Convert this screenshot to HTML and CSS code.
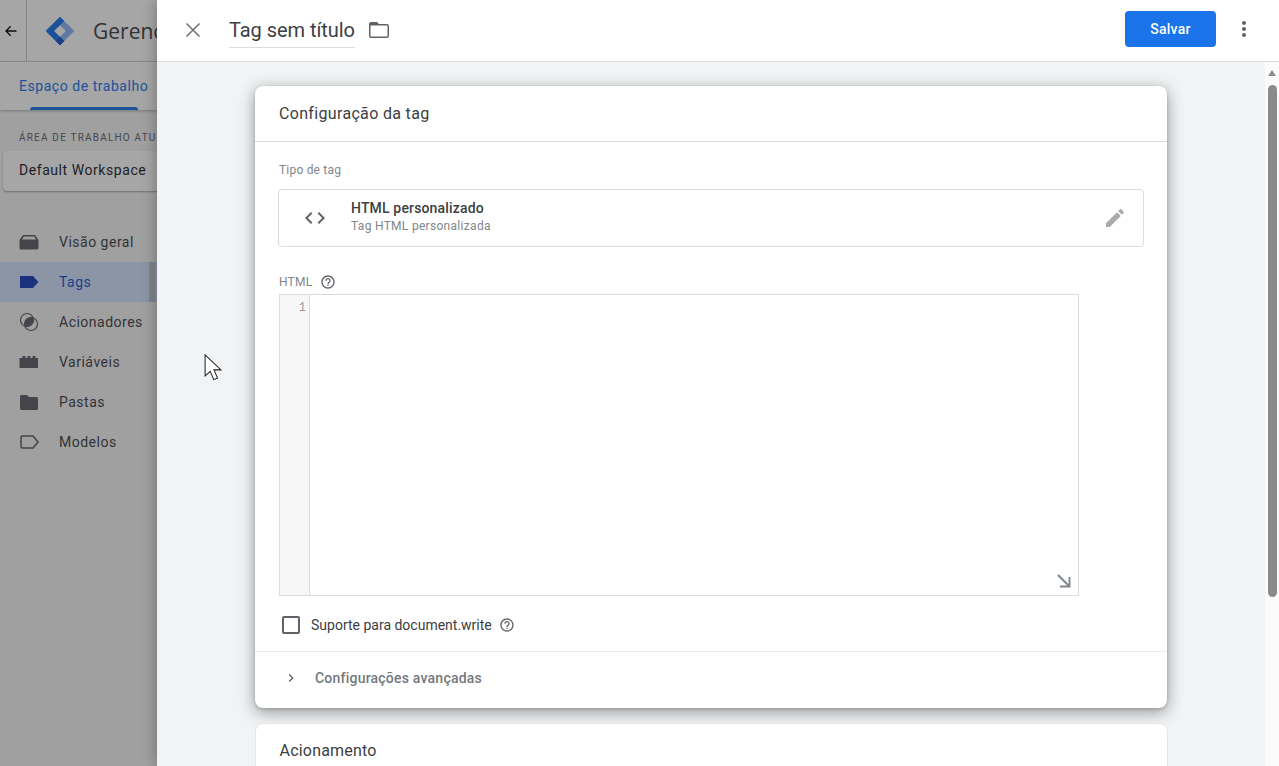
FILE: index.html
```html
<!DOCTYPE html>
<html lang="pt-BR">
<head>
<meta charset="utf-8">
<title>Tag sem título</title>
<link rel="stylesheet" href="styles.css">
</head>
<body>
<div class="app">
  <aside class="side">
    <div class="side-head">
      <div class="back">
        <svg class="back-icon" viewBox="0 0 12 12"><path d="M11.500 6H1.200M5.700 1.300 1 6l4.700 4.700" fill="none" stroke-width="1.300"/></svg>
      </div>
      <svg class="logo" viewBox="0 0 32 32">
        <path fill="#8ab4f8" d="M16 .8 31.200 16 16 31.200 .8 16z"/>
        <path fill="#1a73e8" d="M16 .8 .8 16 16 31.200l4.600-4.600L9.900 16 20.600 5.400z"/>
        <path fill="#1a56c4" d="M11.500 26.700 16 22.100 20.600 26.600 16 31.200z"/>
        <path fill="#fff" d="M16 9.800 22.200 16 16 22.200 9.800 16z"/>
      </svg>
      <span class="product">Gerenciador</span>
    </div>
    <div class="tabs">
      <div class="tab">Espaço de trabalho</div>
    </div>
    <div class="ws-label">ÁREA DE TRABALHO ATUAL</div>
    <div class="ws-box">Default Workspace</div>
    <nav class="nav">
      <div class="nav-row">
        <svg class="nav-icon" viewBox="0 0 20 20"><path d="M4 3h12l3.500 5v8a1.500 1.500 0 0 1-1.500 1.500H2A1.500 1.500 0 0 1 .5 16V8zM4.800 4.500 3 7.500h14l-1.800-3z"/></svg>
        <span>Visão geral</span>
      </div>
      <div class="nav-row active">
        <svg class="nav-icon" viewBox="0 0 20 20"><path d="M1 4h13l5.500 6-5.500 6H1z"/></svg>
        <span>Tags</span>
        <i class="active-bar"></i>
      </div>
      <div class="nav-row">
        <svg class="nav-icon" viewBox="0 0 20 20"><circle cx="8" cy="8" r="6.500" fill="none" stroke="currentColor" stroke-width="1.200"/><circle cx="12" cy="12" r="6.500" fill="none" stroke="currentColor" stroke-width="1.200"/><path d="M14.140 5.860A6.500 6.500 0 0 1 5.860 14.140 6.500 6.500 0 0 1 14.140 5.860z"/></svg>
        <span>Acionadores</span>
      </div>
      <div class="nav-row">
        <svg class="nav-icon" viewBox="0 0 20 20"><path d="M.5 6h3V4h3v2h2V4h3v2h2V4h3v2h2.500v10H.5z"/></svg>
        <span>Variáveis</span>
      </div>
      <div class="nav-row">
        <svg class="nav-icon" viewBox="0 0 20 20"><path d="M3 3h5l2 2h7.500A1.500 1.500 0 0 1 19 6.500v10a1.500 1.500 0 0 1-1.500 1.500h-15A1.500 1.500 0 0 1 1 16.500v-12A1.500 1.500 0 0 1 3 3z"/></svg>
        <span>Pastas</span>
      </div>
      <div class="nav-row">
        <svg class="nav-icon" viewBox="0 0 20 20"><path d="M3.500 4H14l5 6-5 6H3.500A1.500 1.500 0 0 1 2 14.500v-9A1.500 1.500 0 0 1 3.500 4z" fill="none" stroke="currentColor" stroke-width="1.500"/></svg>
        <span>Modelos</span>
      </div>
    </nav>
    <div class="scrim"></div>
  </aside>

  <section class="drawer">
    <header class="top">
      <svg class="close" viewBox="0 0 24 24"><path d="M5.500 5.500l13 13M18.500 5.500l-13 13" fill="none" stroke-width="1.600"/></svg>
      <div class="title">Tag sem título</div>
      <svg class="folder" viewBox="0 0 24 24"><path d="M20 6h-8l-2-2H4c-1.100 0-2 .9-2 2v12c0 1.100.9 2 2 2h16c1.100 0 2-.9 2-2V8c0-1.100-.9-2-2-2zm0 12.500H3.500V7.500h17v11z"/></svg>
      <div class="spacer"></div>
      <button class="save">Salvar</button>
      <svg class="more" viewBox="0 0 24 24"><path d="M12 8c1.100 0 2-.9 2-2s-.9-2-2-2-2 .9-2 2 .9 2 2 2zm0 2c-1.100 0-2 .9-2 2s.9 2 2 2 2-.9 2-2-.9-2-2-2zm0 6c-1.100 0-2 .9-2 2s.9 2 2 2 2-.9 2-2-.9-2-2-2z"/></svg>
    </header>
    <div class="body">
      <main class="content">
        <article class="card main-card">
          <h2 class="card-title">Configuração da tag</h2>
          <div class="card-body">
            <div class="field-label">Tipo de tag</div>
            <div class="tag-type">
              <svg class="code-icon" viewBox="0 0 24 24"><path d="M9.400 16.600 4.800 12l4.600-4.600L8 6l-6 6 6 6zm5.200 0 4.600-4.600-4.600-4.600L16 6l6 6-6 6z"/></svg>
              <div class="tag-text">
                <div class="tag-name">HTML personalizado</div>
                <div class="tag-sub">Tag HTML personalizada</div>
              </div>
              <svg class="pencil" viewBox="0 0 24 24"><path d="M3 17.250V21h3.750L17.810 9.940l-3.750-3.750L3 17.250zM20.710 7.040a1 1 0 0 0 0-1.410l-2.340-2.340a1 1 0 0 0-1.410 0l-1.830 1.830 3.750 3.750 1.830-1.830z"/></svg>
            </div>
            <div class="html-label">
              <span>HTML</span>
              <svg class="help help-wide" viewBox="0 0 24 24"><path d="M11 18h2v-2h-2v2zm1-16C6.480 2 2 6.480 2 12s4.480 10 10 10 10-4.480 10-10S17.520 2 12 2zm0 18c-4.410 0-8-3.590-8-8s3.590-8 8-8 8 3.590 8 8-3.590 8-8 8zm0-14c-2.210 0-4 1.790-4 4h2c0-1.100.9-2 2-2s2 .9 2 2c0 2-3 1.750-3 5h2c0-2.250 3-2.500 3-5 0-2.210-1.790-4-4-4z"/></svg>
            </div>
            <div class="editor">
              <div class="gutter">1</div>
              <div class="code"></div>
              <svg class="resize" viewBox="0 0 14 14"><path d="M1 1 12.500 12.500M12.500 3v9.500H3" fill="none" stroke-width="1.900"/></svg>
            </div>
            <label class="check-row">
              <span class="checkbox"></span>
              <span class="check-text">Suporte para document.write</span>
              <svg class="help" viewBox="0 0 24 24"><path d="M11 18h2v-2h-2v2zm1-16C6.480 2 2 6.480 2 12s4.480 10 10 10 10-4.480 10-10S17.520 2 12 2zm0 18c-4.410 0-8-3.590-8-8s3.590-8 8-8 8 3.590 8 8-3.590 8-8 8zm0-14c-2.210 0-4 1.790-4 4h2c0-1.100.9-2 2-2s2 .9 2 2c0 2-3 1.750-3 5h2c0-2.250 3-2.500 3-5 0-2.210-1.790-4-4-4z"/></svg>
            </label>
          </div>
          <div class="advanced">
            <svg class="chevron" viewBox="0 0 24 24"><path d="M10 6 8.590 7.410 13.170 12l-4.580 4.590L10 18l6-6z"/></svg>
            <span>Configurações avançadas</span>
          </div>
        </article>
        <article class="card second-card">
          <h2 class="card-title plain">Acionamento</h2>
        </article>
      </main>
      <div class="scrollbar">
        <span class="scroll-up"></span>
        <span class="scroll-thumb"></span>
      </div>
    </div>
  </section>

  <svg class="pointer" viewBox="0 0 20 30"><path d="M1 1v22.500l5.500-5 3.800 9 4-1.800-3.800-8.700H18z" fill="#fff" stroke="#202124" stroke-width="1.100" stroke-linejoin="miter"/></svg>
</div>
</body>
</html>
```
FILE: styles.css
```css
* { box-sizing: border-box; }
html, body { margin: 0; height: 100%; }
body { font-family: Roboto, "Liberation Sans", sans-serif; color: #202124; overflow: hidden; }

.app { position: relative; width: 1279px; height: 766px; overflow: hidden; background: #f6f6f6; }

/* dimmed page behind the drawer */
.side { position: relative; width: 165px; height: 100%; overflow: hidden; }
.scrim { position: absolute; inset: 0; background: rgba(32, 33, 36, .4); }
.side-head { display: flex; align-items: center; height: 62px; background: #fff; border-bottom: 1px solid #dadce0; white-space: nowrap; overflow: hidden; }
.back { display: flex; align-items: center; justify-content: center; width: 27px; height: 100%; border-right: 1px solid #c8c8c8; flex: none; }
.back-icon { width: 12px; height: 12px; stroke: #000; margin-left: -4px; }
.logo { width: 30px; height: 30px; margin-left: 18px; flex: none; }
.product { flex: 1; min-width: 0; overflow: hidden; font-family: "Open Sans", sans-serif; font-size: 21px; color: #3c4043; margin-left: 18px; }
.tabs { height: 48px; background: #fff; padding-left: 19px; box-shadow: 0 1px 3px rgba(0,0,0,.3); position: relative; }
.tab { width: 138px; padding-top: 16px; font-size: 14px; font-weight: 400; color: #1a73e8; letter-spacing: .54px; height: 48px; white-space: nowrap; position: relative; }
.tab::after { content: ""; position: absolute; left: 11px; width: 108px; bottom: 0; height: 3px; background: #1a73e8; border-radius: 3px 3px 0 0; }
.ws-label { margin: 20px 0 0 19px; font-size: 10px; letter-spacing: 1.2px; font-weight: 400; line-height: 16px; color: #5f6368; white-space: nowrap; overflow: hidden; }
.ws-box { margin: 5px 0 0 3px; height: 40px; background: #fff; border-radius: 4px; box-shadow: 0 1px 2px rgba(0,0,0,.35); padding-left: 16px; line-height: 38px; font-size: 14px; font-weight: 400; letter-spacing: .56px; color: #202124; white-space: nowrap; }
.nav { margin-top: 31px; }
.nav-row { position: relative; display: flex; align-items: center; height: 40px; padding-left: 19px; font-size: 14px; font-weight: 400; letter-spacing: .5px; color: #3c4043; }
.nav-row span { margin-left: 20px; }
.nav-icon { width: 20px; height: 20px; fill: currentColor; flex: none; }
.nav-row .nav-icon { color: #5b5e66; }
.active { background: #d2e3fc; color: #1a4fd0; }
.active .nav-icon { color: #1a3fc0; }
.active-bar { position: absolute; left: 149px; top: 0; width: 6px; height: 40px; background: #c4c7cf; }

/* drawer */
.drawer { position: absolute; left: 157px; top: 0; right: 0; bottom: 0; display: flex; flex-direction: column; background: #f1f3f4; box-shadow: 0 0 14px rgba(0,0,0,.32); }
.top { display: flex; align-items: center; flex: none; height: 62px; background: #fff; border-bottom: 1px solid #dadce0; padding: 0 0 3px 24px; }
.close { width: 24px; height: 24px; stroke: #6f7377; fill: none; flex: none; margin-top: 2px; }
.title { margin: 2px 0 0 24px; height: 36px; padding-top: 4px; border-bottom: 1px solid #dadce0; font-size: 20px; line-height: 28px; letter-spacing: -.05px; color: #3c4043; white-space: nowrap; }
.folder { width: 24px; height: 24px; margin: 2px 0 0 12px; fill: #5f6368; flex: none; }
.spacer { flex: 1; }
.save { width: 91px; height: 36px; border: 0; border-radius: 4px; background: #1a73e8; color: #fff; font: 500 14px Roboto, sans-serif; letter-spacing: .25px; }
.more { width: 24px; height: 24px; margin: 0 23px 0 16px; fill: #5f6368; flex: none; }

.body { flex: 1; display: flex; min-height: 0; }
.content { flex: 1; min-width: 0; display: flex; flex-direction: column; align-items: center; padding-top: 24px; gap: 15px; overflow: hidden; }
.card { width: 912px; flex: none; background: #fff; border-radius: 8px; }
.main-card { height: 622px; box-shadow: 0 4px 16px rgba(32,33,36,.45), 0 1px 3px rgba(32,33,36,.2); }
.second-card { width: 913px; height: 120px; border: 1px solid #e3e5e8; }
.card-title { margin: 0; height: 56px; padding: 17px 24px 0; font-size: 16px; line-height: 22px; font-weight: 400; letter-spacing: .33px; color: #3c4043; border-bottom: 1px solid #dadce0; }
.card-title.plain { border: 0; padding: 16px 24px 0; letter-spacing: .2px; }
.card-body { padding: 0 24px; }
.field-label { padding-top: 20px; font-size: 12px; line-height: 16px; color: #80868b; letter-spacing: .2px; }
.tag-type { display: flex; align-items: center; height: 58px; margin: 11px -1px 0; border: 1px solid #dadce0; border-radius: 4px; }
.code-icon { width: 24px; height: 24px; margin-left: 24px; fill: #5f6368; flex: none; }
.tag-text { flex: 1; margin-left: 24px; padding-bottom: 4px; }
.tag-name { font-size: 14px; font-weight: 500; line-height: 20px; letter-spacing: .16px; color: #3c4043; }
.tag-sub { font-size: 12px; line-height: 16px; color: #80868b; letter-spacing: .3px; }
.pencil { width: 24px; height: 24px; margin-right: 16px; fill: #a9abad; flex: none; }
.html-label { display: flex; align-items: center; height: 16px; margin-top: 27px; font-size: 12px; color: #80868b; letter-spacing: .2px; }
.help { width: 16px; height: 16px; fill: #5f6368; margin-left: 7px; flex: none; }
.help-wide { margin-left: 8px; }
.editor { position: relative; display: flex; width: 800px; height: 302px; margin-top: 4px; border: 1px solid #dadce0; }
.gutter { width: 30px; background: #f7f7f7; border-right: 1px solid #dadce0; text-align: right; padding: 6px 3px 0 0; font: 12px/14px "Liberation Mono", monospace; color: #999; }
.code { flex: 1; }
.resize { position: absolute; right: 7px; bottom: 7px; width: 14px; height: 14px; stroke: #80868b; }
.check-row { display: flex; align-items: center; height: 18px; margin: 20px 0 0 3px; }
.checkbox { width: 18px; height: 18px; border: 2px solid #5f6368; border-radius: 2px; flex: none; }
.check-text { margin-left: 11px; font-size: 14px; color: #3c4043; white-space: nowrap; }
.advanced { display: flex; align-items: center; height: 57px; margin-top: 17px; padding: 0 0 5px 24px; border-top: 1px solid #e8eaed; font-size: 14px; font-weight: 500; letter-spacing: .22px; color: #74787d; }
.chevron { width: 16px; height: 16px; fill: #5f6368; margin-left: 4px; flex: none; }
.advanced span { margin-left: 16px; }

.scrollbar { position: relative; display: flex; flex-direction: column; align-items: center; width: 14px; flex: none; background: #fbfbfb; }
.scroll-up { width: 0; height: 0; margin-top: 8px; border: 4.5px solid transparent; border-top: 0; border-bottom: 6px solid #8a8b8d; }
.scroll-thumb { width: 9px; height: 512px; margin-top: 9px; background: #8a8b8d; border-radius: 5px; }

.pointer { position: absolute; left: 204px; top: 354px; width: 19px; height: 28px; }
```
